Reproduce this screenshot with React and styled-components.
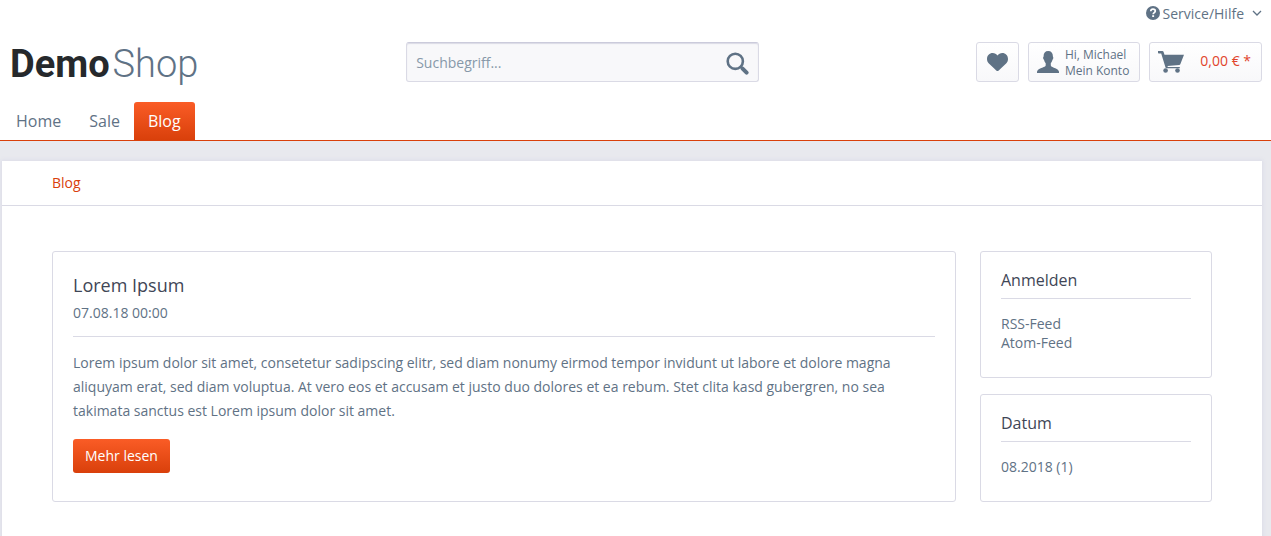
import React from 'react';
import styled, { ThemeProvider, createGlobalStyle } from 'styled-components';

const theme = {
  font: '"Open Sans", "Liberation Sans", sans-serif',
  colors: {
    text: '#5f7285',
    heading: '#3f4656',
    highlight: '#d9400b',
    highlightLight: '#fa5c26',
    price: '#e1442b',
    border: '#dadae5',
    panel: '#f8f8fa',
    page: '#e8e9ee',
    placeholder: '#8798a9',
  },
};

const GlobalStyle = createGlobalStyle`
  * { box-sizing: border-box; }
  body {
    margin: 0;
    min-height: 100vh;
    background: ${({ theme }) => theme.colors.page};
    color: ${({ theme }) => theme.colors.text};
    font-family: ${({ theme }) => theme.font};
    font-size: 14px;
    line-height: 19px;
  }
  #root { min-height: 100vh; display: flex; }
  h1, h2, p, ul { margin: 0; padding: 0; }
  ul { list-style: none; }
  a { color: inherit; text-decoration: none; }
  button, input { font: inherit; color: inherit; }
`;

// --- LAYOUT ---

const Shop = styled.div`
  flex: 1;
  display: flex;
  flex-direction: column;
  min-height: 100vh;
`;

const Header = styled.header`
  background: #fff;
  border-bottom: 1px solid ${({ theme }) => theme.colors.highlight};
`;

const Container = styled.div`
  margin: 0 9px 0 2px;
`;

const Page = styled.main`
  flex: 1;
  margin: 20px 9px 0 2px;
  background: #fff;
  box-shadow: 0 0 4px 1px #dcdce8;
`;

// --- HEADER ---

const TopBar = styled.div`
  display: flex;
  justify-content: flex-end;
  height: 42px;
  padding-top: 3px;
`;

const ServiceButton = styled.button`
  display: flex;
  align-items: center;
  gap: 3px;
  height: 20px;
  padding: 0;
  border: none;
  background: none;
  cursor: pointer;

  svg:last-child {
    margin-left: 5px;
  }
`;

const HeaderMain = styled.div`
  display: flex;
  align-items: flex-start;
  height: 60px;
`;

const Logo = styled.a`
  display: flex;
  align-items: center;
  gap: 3px;
  width: 32%;
  height: 44px;
  padding-left: 8px;
  font-family: Roboto, "Liberation Sans", sans-serif;
  font-size: 38px;
  line-height: 44px;
  font-weight: 300;

  strong {
    font-weight: 700;
    color: #26292c;
  }
`;

const SearchForm = styled.form`
  display: flex;
  width: 28%;
  height: 40px;
  margin-left: 1px;
  border: 1px solid ${({ theme }) => theme.colors.border};
  border-top-color: #cbcbdb;
  border-radius: 3px;
  background: ${({ theme }) => theme.colors.panel};
  box-shadow: inset 0 1px 1px ${({ theme }) => theme.colors.border};
`;

const SearchInput = styled.input`
  flex: 1;
  min-width: 0;
  padding: 0 9px;
  border: none;
  outline: none;
  background: none;

  &::placeholder {
    color: ${({ theme }) => theme.colors.placeholder};
    opacity: 1;
  }
`;

const SearchButton = styled.button`
  display: flex;
  align-items: center;
  padding: 2px 9px 0;
  border: none;
  background: none;
  cursor: pointer;
`;

const Actions = styled.div`
  display: flex;
  gap: 9px;
  margin-left: auto;
`;

const ActionButton = styled.a`
  display: flex;
  align-items: center;
  gap: ${({ $gap }) => $gap || '0'};
  height: 40px;
  padding: ${({ $padding }) => $padding || '0 10px'};
  border: 1px solid ${({ theme }) => theme.colors.border};
  border-radius: 3px;
  background: linear-gradient(#fff, ${({ theme }) => theme.colors.panel});
`;

const AccountLabel = styled.span`
  padding-top: 2px;
  font-size: 12px;
  line-height: 16px;
`;

const CartAmount = styled.span`
  color: ${({ theme }) => theme.colors.price};
  padding-bottom: 4px;
`;

const NavList = styled.ul`
  display: flex;
`;

const NavLink = styled.a`
  display: block;
  padding: 0 14px;
  border-radius: 3px 3px 0 0;
  font-size: 16px;
  line-height: 38px;
  color: ${({ $active }) => ($active ? '#fff' : 'inherit')};
  background: ${({ $active, theme }) =>
    $active ? `linear-gradient(${theme.colors.highlightLight}, ${theme.colors.highlight})` : 'none'};
`;

// --- CONTENT ---

const Breadcrumb = styled.nav`
  height: 45px;
  padding: 0 50px;
  border-bottom: 1px solid ${({ theme }) => theme.colors.border};
  line-height: 44px;
  color: ${({ theme }) => theme.colors.highlight};
`;

const Content = styled.div`
  display: flex;
  align-items: flex-start;
  gap: 24px;
  padding: 45px 50px;
`;

const Card = styled.section`
  border: 1px solid ${({ theme }) => theme.colors.border};
  border-radius: 3px;
`;

const Article = styled(Card).attrs({ as: 'article' })`
  flex: 1;
  padding: 19px 20px 28px;
`;

const ArticleHeader = styled.header`
  padding-bottom: 14px;
  border-bottom: 1px solid ${({ theme }) => theme.colors.border};
`;

const ArticleTitle = styled.h1`
  margin-bottom: 4px;
  font-size: 18px;
  line-height: 28px;
  font-weight: 400;
  color: ${({ theme }) => theme.colors.heading};
`;

const ArticleText = styled.p`
  margin: 14px 0 16px;
  line-height: 24px;
`;

const PrimaryLink = styled.a`
  display: inline-block;
  padding: 0 12px;
  border-radius: 3px;
  background: linear-gradient(
    ${({ theme }) => theme.colors.highlightLight},
    ${({ theme }) => theme.colors.highlight}
  );
  color: #fff;
  font-weight: 500;
  line-height: 34px;
  vertical-align: top;
`;

const Sidebar = styled.aside`
  display: flex;
  flex-direction: column;
  gap: 16px;
  width: 20%;
`;

const FilterCard = styled(Card)`
  padding: 16px 20px 25px;
`;

const FilterTitle = styled.h2`
  padding-bottom: 6px;
  margin-bottom: 15px;
  border-bottom: 1px solid ${({ theme }) => theme.colors.border};
  font-size: 16px;
  line-height: 24px;
  font-weight: 400;
  color: ${({ theme }) => theme.colors.heading};
`;

// --- ICONS ---

const HelpIcon = () => (
  <svg width="14" height="14" viewBox="0 0 14 14" aria-hidden="true">
    <circle cx="7" cy="7" r="7" fill="currentColor" />
    <path
      d="M4.8 5.3C4.8 3.9 5.7 3.2 7 3.2s2.3.7 2.3 1.9c0 1.5-2.1 1.5-2.1 3.1"
      fill="none"
      stroke="#fff"
      strokeWidth="1.7"
    />
    <rect x="6.2" y="9.2" width="1.9" height="1.8" fill="#fff" />
  </svg>
);

const ArrowDownIcon = () => (
  <svg width="10" height="6" viewBox="0 0 10 6" aria-hidden="true">
    <path d="M1 1l4 4 4-4" fill="none" stroke="currentColor" strokeWidth="1.3" />
  </svg>
);

const SearchIcon = () => (
  <svg width="23" height="23" viewBox="0 0 23 23" aria-hidden="true">
    <circle cx="9.3" cy="9.3" r="7.6" fill="none" stroke="currentColor" strokeWidth="2.6" />
    <path d="M15 15l1.200 1.200" stroke="currentColor" strokeWidth="2.6" />
    <path d="M16.600 16.600l4 4" stroke="currentColor" strokeWidth="4" strokeLinecap="round" />
  </svg>
);

const HeartIcon = () => (
  <svg width="21" height="18" viewBox="0 0 21 18" aria-hidden="true">
    <path
      d="M10.500 18C9.700 18 9 17.200 8 16.200L1.900 10.400C.6 9.100 0 7.600 0 5.900 0 2.600 2.500 0 5.700 0c2 0 3.700.9 4.800 2.500C11.600.9 13.300 0 15.300 0 18.500 0 21 2.600 21 5.900c0 1.700-.6 3.200-1.900 4.500L13 16.200c-1 1-1.700 1.800-2.500 1.800z"
      fill="currentColor"
    />
  </svg>
);

const AccountIcon = () => (
  <svg width="22" height="22" viewBox="0 0 22 22" aria-hidden="true">
    <path
      d="M11.200 0C14.200 0 15.900 2 15.900 5.200c0 .7.400.7.400 1.600 0 1-.5 1.600-.9 2.300-.3 1.400-.9 2.300-1.600 3.100v2.300c.3 1.500 2.700 1.900 4.500 2.700 2.200.9 3.400 1.800 3.700 3.600V22H0v-1.200c.3-1.800 1.500-2.700 3.700-3.600 1.800-.8 4.700-1.200 5-2.700v-2.300c-.8-.8-1.300-1.700-1.600-3.100-.5-.7-1-1.300-1-2.300 0-.9.5-.9.5-1.600C6.600 2 8.200 0 11.200 0z"
      fill="currentColor"
    />
  </svg>
);

const CartIcon = () => (
  <svg width="26" height="22" viewBox="0 0 26 22" aria-hidden="true">
    <path
      d="M0 0h4.300c.7 0 1.100.3 1.300.9L6.500 3.700H26l-3.700 9.500c-.2.500-.6.7-1.100.8L9.500 15l.3 1h12v1.200H8.600c-.6 0-.9-.3-1.100-.8L3.200 2.600H1C.5 2.600 0 2 0 1.500z"
      fill="currentColor"
    />
    <circle cx="7.600" cy="19.500" r="2.300" fill="currentColor" />
    <circle cx="19.500" cy="19.500" r="2.300" fill="currentColor" />
  </svg>
);

// --- DATA ---

const navItems = [{ label: 'Home' }, { label: 'Sale' }, { label: 'Blog', active: true }];

const filters = [
  { title: 'Anmelden', links: ['RSS-Feed', 'Atom-Feed'] },
  { title: 'Datum', links: ['08.2018 (1)'] },
];

function App() {
  return (
    <ThemeProvider theme={theme}>
      <GlobalStyle />
      <Shop>
        <Header>
          <Container>
            <TopBar>
              <ServiceButton type="button">
                <HelpIcon />
                Service/Hilfe
                <ArrowDownIcon />
              </ServiceButton>
            </TopBar>
            <HeaderMain>
              <Logo href="#">
                <strong>Demo</strong>
                <span>Shop</span>
              </Logo>
              <SearchForm role="search">
                <SearchInput type="text" aria-label="Suchbegriff" placeholder="Suchbegriff..." />
                <SearchButton type="submit" aria-label="Suchen">
                  <SearchIcon />
                </SearchButton>
              </SearchForm>
              <Actions>
                <ActionButton href="#" aria-label="Merkzettel">
                  <HeartIcon />
                </ActionButton>
                <ActionButton href="#" $gap="6px" $padding="0 10px 0 8px">
                  <AccountIcon />
                  <AccountLabel>
                    Hi, Michael
                    <br />
                    Mein Konto
                  </AccountLabel>
                </ActionButton>
                <ActionButton href="#" $gap="16px" $padding="0 10px 0 8px">
                  <CartIcon />
                  <CartAmount>0,00 € *</CartAmount>
                </ActionButton>
              </Actions>
            </HeaderMain>
            <nav>
              <NavList>
                {navItems.map((item) => (
                  <li key={item.label}>
                    <NavLink href="#" $active={item.active}>
                      {item.label}
                    </NavLink>
                  </li>
                ))}
              </NavList>
            </nav>
          </Container>
        </Header>

        <Page>
          <Breadcrumb>
            <a href="#">Blog</a>
          </Breadcrumb>
          <Content>
            <Article>
              <ArticleHeader>
                <ArticleTitle>Lorem Ipsum</ArticleTitle>
                <p>07.08.18 00:00</p>
              </ArticleHeader>
              <ArticleText>
                Lorem ipsum dolor sit amet, consetetur sadipscing elitr, sed diam nonumy eirmod tempor
                invidunt ut labore et dolore magna aliquyam erat, sed diam voluptua. At vero eos et
                accusam et justo duo dolores et ea rebum. Stet clita kasd gubergren, no sea takimata
                sanctus est Lorem ipsum dolor sit amet.
              </ArticleText>
              <PrimaryLink href="#">Mehr lesen</PrimaryLink>
            </Article>
            <Sidebar>
              {filters.map((filter) => (
                <FilterCard key={filter.title}>
                  <FilterTitle>{filter.title}</FilterTitle>
                  <ul>
                    {filter.links.map((link) => (
                      <li key={link}>
                        <a href="#">{link}</a>
                      </li>
                    ))}
                  </ul>
                </FilterCard>
              ))}
            </Sidebar>
          </Content>
        </Page>
      </Shop>
    </ThemeProvider>
  );
}

export default App;
